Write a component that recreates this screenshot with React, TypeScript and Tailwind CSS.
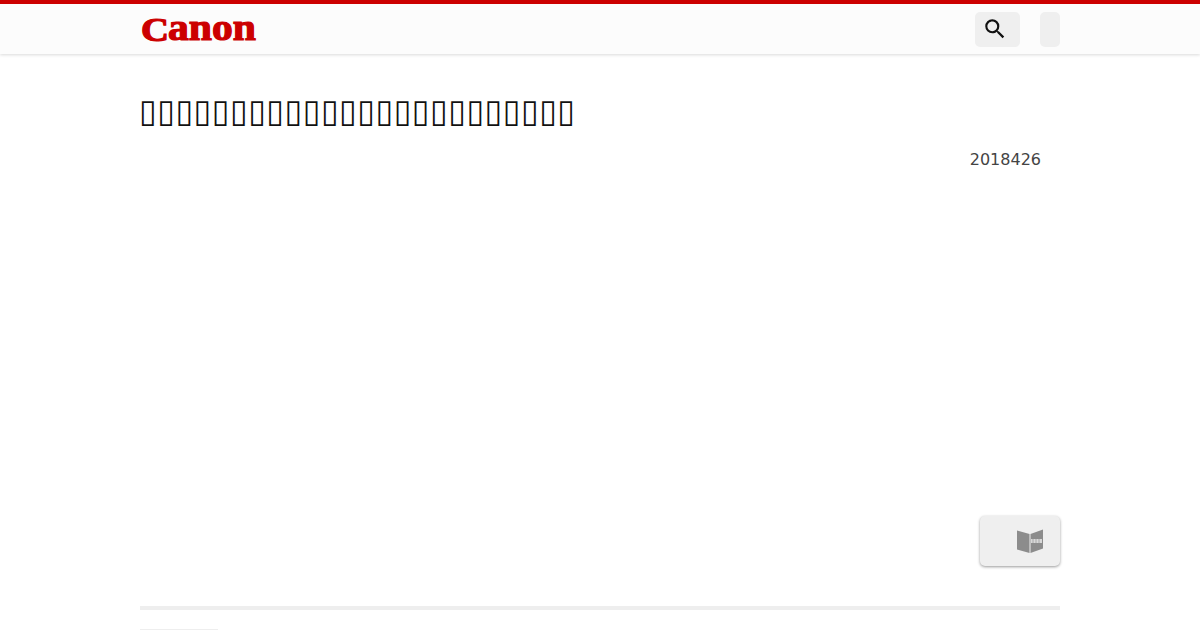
export default function App() {
  const boxes = "\u25AF".repeat(24);
  return (
    <div className="h-[630px] overflow-hidden bg-white font-['DejaVu_Sans',sans-serif] text-[#333]">
      <header className="h-[54px] border-t-4 border-[#cc0000] bg-[#fcfcfc] shadow-[0_1px_3px_rgba(0,0,0,0.15)]">
        <div className="mx-auto flex h-full w-[920px] items-center justify-between">
          <svg width="118" height="40" viewBox="0 0 118 40" className="-mt-[1px] overflow-visible" role="img" aria-label="Canon">
            <g fill="#cc0000" stroke="#cc0000" style={{ fontFamily: "'Liberation Serif', serif", fontWeight: 700 }}>
              <text x="1" y="31.500" fontSize="34" strokeWidth="1.2" textLength="28" lengthAdjust="spacingAndGlyphs">C</text>
              <text x="28" y="31" fontSize="38" strokeWidth="1.2" textLength="88" lengthAdjust="spacingAndGlyphs">anon</text>
            </g>
          </svg>
          <div className="flex items-center gap-5">
            <button className="flex h-[35px] w-[45px] items-center justify-start rounded-[5px] bg-[#efefef] pl-[7px]">
              <svg width="26" height="26" viewBox="0 0 24 24" fill="#111">
                <path d="M15.5 14h-.79l-.28-.27A6.471 6.471 0 0 0 16 9.5 6.5 6.5 0 1 0 9.5 16c1.61 0 3.09-.59 4.23-1.57l.27.28v.79l5 4.99L20.49 19l-4.99-5zm-6 0C7.01 14 5 11.99 5 9.5S7.01 5 9.5 5 14 7.01 14 9.5 11.99 14 9.5 14z" />
              </svg>
            </button>
            <button className="h-[35px] w-5 rounded-[5px] bg-[#efefef]" />
          </div>
        </div>
      </header>
      <main className="mx-auto w-[920px]">
        <h1 className="-ml-px mt-[37px] whitespace-nowrap text-[32px] leading-[40px] tracking-[0.58px] text-[#111]">{boxes}</h1>
        <p className="mt-[17px] pr-[19px] text-right text-base leading-6 text-[#444]">2018426</p>
        <div className="mt-[344px] flex justify-end">
          <button className="flex h-[50px] w-[80px] items-center justify-end rounded-[5px] bg-[#efefef] pr-[16px] shadow-[0_1px_3px_rgba(0,0,0,0.4)]">
            <svg width="28" height="26" viewBox="0 0 28 26">
              <path d="M1 2.500 13.500 6v19L1 21.500z" fill="#8c8c8c" />
              <path d="M14.500 6 27 1.500v19L14.500 25z" fill="#8c8c8c" />
              <rect x="15" y="11" width="11" height="4" fill="#d8d8d8" />
              <path d="M16 12h9M16 14h9" stroke="#8c8c8c" strokeWidth="0.6" strokeDasharray="2 1" />
            </svg>
          </button>
        </div>
        <div className="mt-10 h-1 bg-[#eeeeee]" />
        <div className="mt-[19px] h-px w-[78px] bg-[#eeeeee]" />
      </main>
    </div>
  );
}
